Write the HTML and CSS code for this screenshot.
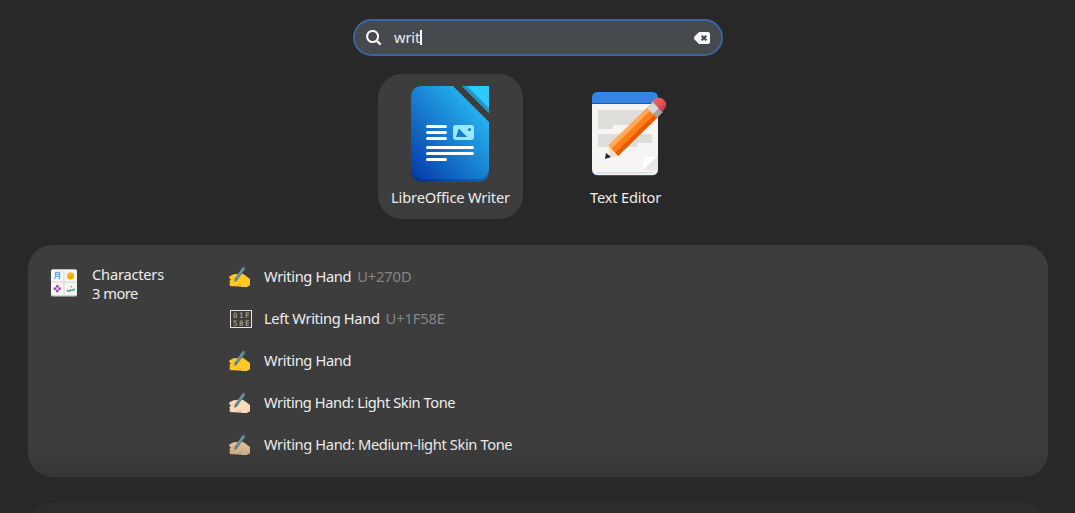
FILE: index.html
```html
<!DOCTYPE html>
<html lang="en">
<head>
<meta charset="utf-8">
<title>Search</title>
<link rel="stylesheet" href="styles.css">
</head>
<body>
<svg class="defs" width="0" height="0">
  <symbol id="hand" viewBox="0 0 24 24">
    <path d="M1.3 11.4 5.5 9.2 9 9.1 14 8.4l2.4 1.3 5.6 4.3v6.2l-3.3 1.8-6.7.1-2-.8-1 .6-1.2-1-1.2.9-1.2-1-1.3.6-2.2-.7-.5-2 1.1-.8L1.2 17l1.5-2.7-1.5-1.4z" fill="currentColor"/>
    <path d="m3 14.6 2.4-1M9.3 20.7l2.2-1 2.3.3" fill="none" stroke="#7a3b12" stroke-opacity=".22" stroke-width=".8"/>
    <path d="m2.8 20.9.6.9M6 21v.8M9 21v.8M12 21.2l.5.7" stroke="#59616a" stroke-width="1.1"/>
    <path d="M15.6 3.5 8.2 14.2" stroke="#607f8c" stroke-width="3.1" stroke-linecap="round"/>
    <path d="m6.8 13.4 2.6 1.9-3.2 2z" fill="#607f8c"/>
    <path d="M15.1 3.5 8.5 13" stroke="#7897a3" stroke-width="1.3"/>
  </symbol>
</svg>
<main class="overview">
  <div class="search">
    <svg class="search-icon" viewBox="0 0 16 16"><circle cx="6.6" cy="6.5" r="5.5" fill="none" stroke="#f6f6f6" stroke-width="2.1"/><path d="m10.6 10.6 4 4" stroke="#f6f6f6" stroke-width="2.3"/></svg>
    <span class="query">writ</span><span class="caret"></span>
    <svg class="clear-icon" viewBox="0 0 16 12"><path d="M5 0h9q2 0 2 2v8q0 2-2 2H5L.5 7.5q-1-1.5 0-3z" fill="#f6f6f6"/><path d="m7.6 3.7 4.8 4.6m0-4.6L7.6 8.3" stroke="#46494d" stroke-width="2"/></svg>
  </div>
  <div class="apps">
    <div class="app selected">
      <svg class="app-icon" viewBox="0 0 96 96">
        <defs>
          <linearGradient id="page-blue" x1="0" y1="1" x2="1" y2="0"><stop stop-color="#0538a7"/><stop offset="1" stop-color="#2dceff"/></linearGradient>
          <linearGradient id="page-edge"><stop stop-color="#062f86"/><stop offset="1" stop-color="#1767ad"/></linearGradient>
        </defs>
        <path d="M9 70v14q0 12 12 12h54q12 0 12-12V70z" fill="url(#page-edge)"/>
        <path d="M21 0h30l36 36v45q0 12-12 12H21Q9 93 9 81V12Q9 0 21 0z" fill="url(#page-blue)"/>
        <path d="M60 0h27v27z" fill="#2ccaff"/><path d="M60 0h5l22 22v5z" fill="#2296c4"/>
        <path d="M25.5 40.5h18m-18 6h18m-18 6h18m-18 9h45m-45 6h45m-45 6h18" stroke="#fff" stroke-width="3" stroke-linecap="round"/>
        <rect x="51" y="39" width="21" height="15" rx="3" fill="#99e9ff"/>
        <path d="m54 51 2.5-8q1.4 0 2.5 1.6l2 2.4 4.5 4z" fill="#167cc9"/><circle cx="67.5" cy="43.5" r="1.6" fill="#167cc9"/>
      </svg>
      <span class="app-name writer">LibreOffice Writer</span>
    </div>
    <div class="app">
      <svg class="app-icon" viewBox="0 0 96 96">
        <defs>
          <linearGradient id="eraser" x1="0" y1="0" x2="1" y2="1"><stop stop-color="#f16b72"/><stop offset=".5" stop-color="#df525a"/><stop offset="1" stop-color="#b8323b"/></linearGradient>
        </defs>
        <rect x="15" y="6" width="66" height="84" rx="6" fill="#185bb4"/>
        <path d="M15 17V12q0-6 6-6h54q6 0 6 6v5z" fill="#3584e4"/>
        <path d="M15 18h66v65q0 6-6 6H21q-6 0-6-6z" fill="#f6f5f4"/>
        <path d="M19 86h58v1.5H19z" fill="#deddda"/>
        <path d="M21 24h54v15H36v4H21zM21 48h54v9H60v4H21z" fill="#deddda"/>
        <path d="m66 84 15-15v13q0 3-3 3z" fill="#e9e8e6"/><path d="m66 84 14-13H70q-4 0-4 4z" fill="#fff"/>
        <path d="m31 60 41-40 10 10-41 40z" fill="#ff7e18"/>
        <path d="m31 60 41-40 3 3-41 40z" fill="#ffac58"/>
        <path d="m38 67 41-40 3 3-41 40z" fill="#e65b00"/>
        <path d="m31 59 10 11-13 2z" fill="#eadfc9"/>
        <path d="m31 59 2 8-5 5z" fill="#fff0db"/><path d="m29 67 5 4-6 2z" fill="#252233"/>
        <path d="m70 22 6-6 10 10-6 6z" fill="#a5a4a2"/><path d="m70 22 6-6 6 6-6 6z" fill="#d9d8d6"/>
        <path d="m75 15 3-2q5-3 9 1t1 8l-3 4z" fill="url(#eraser)"/>
      </svg>
      <span class="app-name editor">Text Editor</span>
    </div>
  </div>
  <section class="results">
    <div class="provider">
      <svg class="provider-icon" viewBox="0 0 26 28">
        <rect width="26" height="27" rx="1.5" y=".5" fill="#d2d1ce"/><rect y=".5" width="26" height="25.5" rx="1.5" fill="#f6f5f4"/>
        <path d="M13 1v25M0 13h26" stroke="#d7d6d3" stroke-width="1"/>
        <path d="M4.3 3.4h4.4v6q0 .8-1.4.5M4.6 3.4v3.8q0 2-1.3 3M4.5 5.4h4M4.5 7.4h4" fill="none" stroke="#4a90df" stroke-width=".9"/>
        <circle cx="19.5" cy="7" r="3.7" fill="#f5c211"/><path d="M17.2 7.2h4.6q-.2 2.6-2.3 2.6t-2.3-2.6" fill="#ee9c10"/><path d="M18 5.2v1M21 5.2v1" stroke="#b97a0b" stroke-width=".7"/>
        <g fill="#9c4bb5"><circle cx="6.3" cy="17.4" r="1.45"/><circle cx="6.3" cy="22" r="1.45"/><circle cx="4" cy="19.7" r="1.45"/><circle cx="8.6" cy="19.7" r="1.45"/></g>
        <path d="M16.3 20.5q0 2 1.5 2 1.3 0 1.3-2.3 0 1.3 1.2 1.3 1.3 0 1.3-1.3 0 1.3 1.2 1.1.8-.1.3-1.9M20.4 17v1.2M19.4 18.5h.1M21.4 18.5h.1" fill="none" stroke="#2ba66e" stroke-width="1.1"/>
      </svg>
      <div class="provider-text"><div class="provider-name">Characters</div><div class="more">3 more</div></div>
    </div>
    <div class="list">
      <div class="row"><svg class="glyph yellow"><use href="#hand"/></svg><span class="title short">Writing Hand</span><span class="code first">U+270D</span></div>
      <div class="row">
        <svg class="glyph" viewBox="0 0 24 24"><rect x="2.5" y="3.5" width="21" height="17" fill="none" stroke="#e4e4e4"/><text class="hex" x="5" y="11.3" textLength="16.5">01F</text><text class="hex" x="5" y="18.7" textLength="16.5">58E</text></svg>
        <span class="title left">Left Writing Hand</span><span class="code second">U+1F58E</span>
      </div>
      <div class="row"><svg class="glyph yellow"><use href="#hand"/></svg><span class="title short">Writing Hand</span></div>
      <div class="row"><svg class="glyph light"><use href="#hand"/></svg><span class="title light-title">Writing Hand: Light Skin Tone</span></div>
      <div class="row"><svg class="glyph medium"><use href="#hand"/></svg><span class="title medium-title">Writing Hand: Medium-light Skin Tone</span></div>
    </div>
  </section>
  <section class="results next"></section>
  <div class="fade"></div>
</main>
</body>
</html>
```
FILE: styles.css
```css
* { box-sizing: border-box; }
body { margin: 0; background: #282828; color: #ededed; font: 14.67px/19px "Noto Sans", "Open Sans", sans-serif; }
.defs { position: absolute; }
.overview { position: relative; width: 1075px; height: 513px; padding: 19px 27px 0 28px; overflow: hidden; white-space: nowrap; }
.search { display: flex; align-items: center; width: 370px; height: 37px; margin-left: 325px; padding: 0 11px; border: 2px solid #3b659e; border-radius: 19px; background: #46494d; }
.search-icon { width: 16px; height: 16px; margin-right: 12px; }
.query { letter-spacing: -.12px; }
.caret { width: 2px; height: 15px; background: #fff; }
.clear-icon { width: 16px; height: 12px; margin-left: auto; }
.apps { display: flex; gap: 30px; margin: 18px 0 0 350px; }
.app { display: flex; flex-direction: column; align-items: center; width: 145px; height: 145px; padding-top: 12px; border-radius: 24px; }
.selected { background: #3d3d3d; }
.app-icon { width: 96px; height: 96px; margin: 0 1px 6px 0; }
.writer { letter-spacing: -.17px; }
.editor { letter-spacing: -.18px; }
.results { display: flex; width: 1020px; height: 232px; margin-top: 26px; padding: 11px 22px; border-radius: 24px; background: #3d3d3d; }
.provider { display: flex; width: 178px; padding-top: 9px; gap: 15px; }
.provider-icon { width: 26px; height: 28px; margin: 4px 0 0 1px; }
.provider-name { letter-spacing: -.22px; }
.more { letter-spacing: -.48px; }
.list { display: flex; flex-direction: column; }
.row { display: flex; align-items: center; height: 42px; }
.glyph { width: 24px; height: 24px; margin-right: 12px; }
.title, .code { padding-bottom: 2px; }
.short, .left { letter-spacing: -.35px; }
.light-title { letter-spacing: -.43px; }
.medium-title { letter-spacing: -.37px; }
.yellow { color: #ffca24; }
.light { color: #fadcbc; }
.medium { color: #e0bb95; }
.hex { fill: #b8b8b8; font: 7.5px "DejaVu Sans Mono", monospace; }
.code { margin-left: 6px; color: #858585; letter-spacing: -.12px; }
.fade { position: absolute; left: 0; right: 0; bottom: 0; height: 68px; background: linear-gradient(#28282800, #282828d4); }
```
